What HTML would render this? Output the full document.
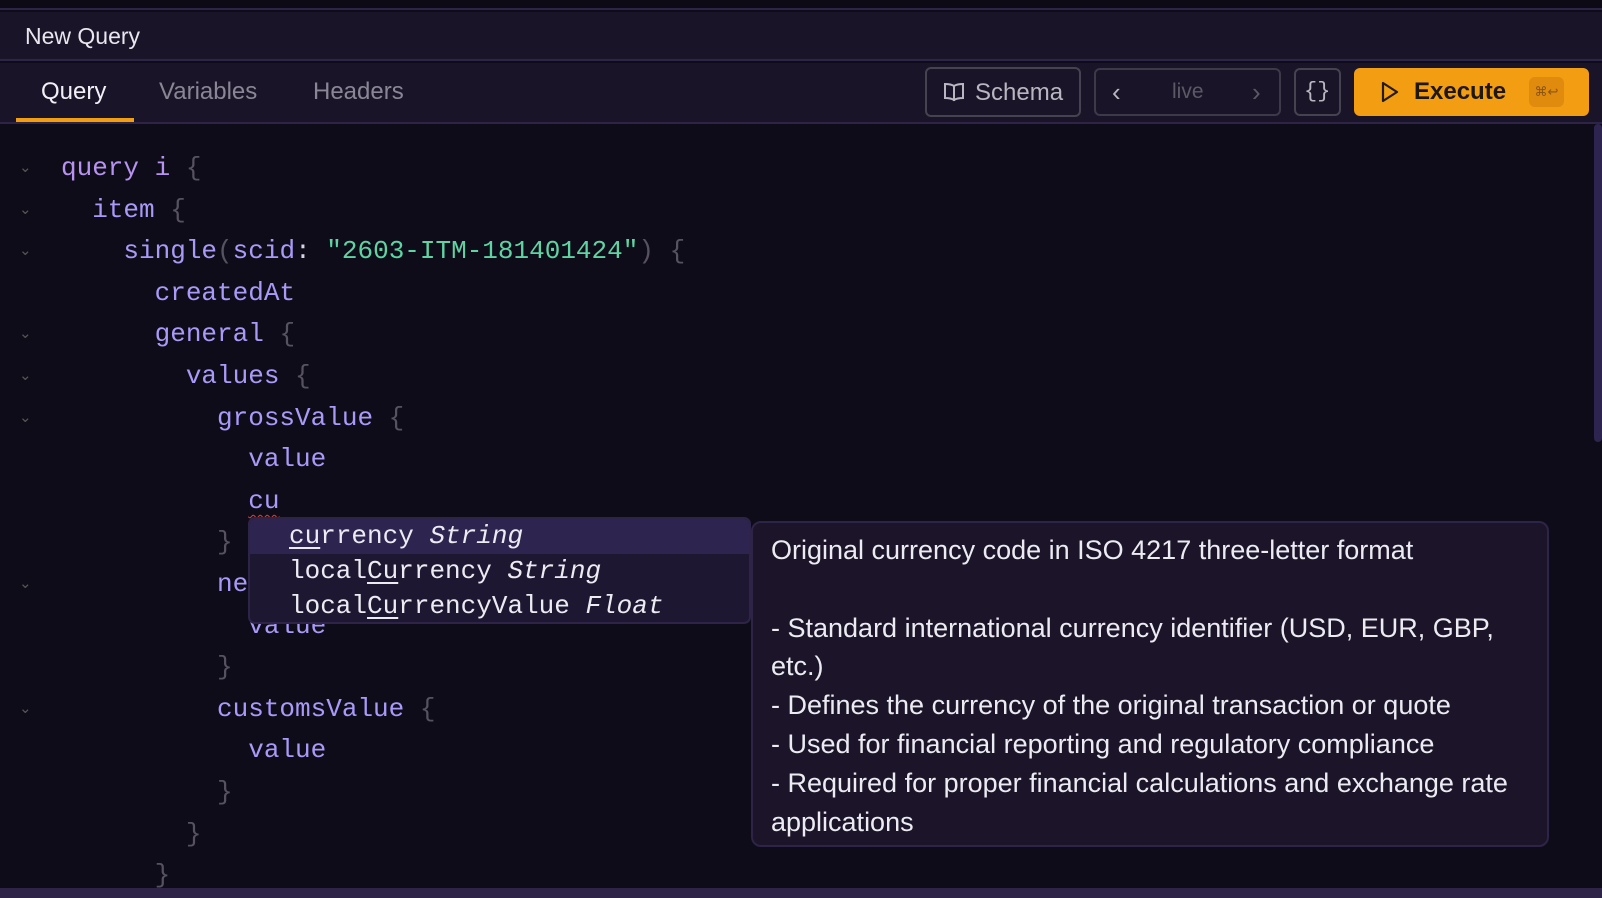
<!DOCTYPE html>
<html><head><meta charset="utf-8"><style>
*{margin:0;padding:0;box-sizing:border-box}
body{width:1602px;height:898px;background:#0f0c1a;position:relative;overflow:hidden;font-family:"Liberation Sans",sans-serif}
.top{position:absolute;left:0;top:0;width:1602px;height:10px;background:#0d0a16;border-bottom:2px solid #2e2448}
.hdr{position:absolute;left:0;top:12px;width:1602px;height:49px;background:#1a1428;border-bottom:2px solid #2e2448;color:#e8e6ee;font-size:23px;padding-left:25px;line-height:48px}
.tabs{position:absolute;left:0;top:63px;width:1602px;height:61px;background:#1a1428;border-bottom:2px solid #2e2448}
.tab{position:absolute;top:15px;font-size:24px;color:#8a8696}
.ul{position:absolute;left:16px;top:55px;width:118px;height:4px;background:#f29d12}
.btn{position:absolute;border:2px solid #46424f;border-radius:6px;color:#b8b6c0;font-size:24px}
.code{position:absolute;left:61px;top:148px;font-family:"Liberation Mono",monospace;font-size:26px;line-height:41.6px;color:#a99af8}
.code div{height:41.6px;white-space:pre}
.b{color:#56525f}.s{color:#5fd3a2}.w{color:#d8d4e4}.k{color:#b892f0}
.chev{position:absolute;left:19px;font-size:15px;color:#555;font-family:"DejaVu Sans",sans-serif}
.ac{position:absolute;left:248px;top:517px;width:503px;height:107px;background:#1d1731;border:2px solid #2e2448;border-radius:7px;font-family:"Liberation Mono",monospace;font-size:26px;color:#ecebf2;overflow:hidden}
.ac div{height:35px;line-height:35px;padding-left:39px;white-space:pre}
.ac .sel{background:#2e2450}
.ac u{text-decoration-thickness:2px;text-underline-offset:4px}
.tip{position:absolute;left:751px;top:521px;width:798px;height:326px;background:#1c1529;border:2px solid #2e2448;border-radius:10px;color:#ecebf2;font-size:27px;line-height:38.8px;padding:8px 18px}
.sb{position:absolute;left:1594px;top:124px;width:8px;height:318px;background:#2e2450;border-radius:4px}
.bot{position:absolute;left:0;top:888px;width:1602px;height:10px;background:#2d2448}
</style></head><body>
<div class="top"></div>
<div class="hdr">New Query</div>
<div class="tabs">
<div class="tab" style="left:41px;color:#f2f0f6">Query</div>
<div class="tab" style="left:159px">Variables</div>
<div class="tab" style="left:313px">Headers</div>
<div class="ul"></div>
</div>
<div class="btn" style="left:925px;top:67px;width:156px;height:50px">
<svg style="position:absolute;left:16px;top:13px" width="22" height="20" viewBox="0 0 22 20" fill="none" stroke="#b8b6c0" stroke-width="2"><path d="M11 4C8 2 5 2 2 2v14c3 0 6 0 9 2c3-2 6-2 9-2V2c-3 0-6 0-9 2zM11 4v15"/></svg>
<span style="position:absolute;left:48px;top:10px">Schema</span></div>
<div class="btn" style="left:1094px;top:68px;width:187px;height:48px;border-color:#3d3948">
<span style="position:absolute;left:16px;top:7px;font-size:26px">‹</span>
<span style="position:absolute;left:76px;top:10px;font-size:21px;color:#5c5866">live</span>
<span style="position:absolute;left:156px;top:7px;font-size:26px;color:#5c5866">›</span></div>
<div class="btn" style="left:1294px;top:68px;width:47px;height:48px"><span style="position:absolute;left:8px;top:9px;font-size:22px;font-family:'Liberation Mono',monospace">{}</span></div>
<div style="position:absolute;left:1354px;top:68px;width:235px;height:48px;background:#f29d12;border-radius:6px">
<svg style="position:absolute;left:26px;top:13px" width="20" height="22" viewBox="0 0 20 22" fill="none" stroke="#231a10" stroke-width="2.2" stroke-linejoin="round"><path d="M3 2L17 11L3 20Z"/></svg>
<span style="position:absolute;left:60px;top:10px;font-size:24px;font-weight:bold;color:#1e1710">Execute</span>
<div style="position:absolute;left:175px;top:9px;width:35px;height:30px;background:#e08a0e;border-radius:6px;color:#8a5510;font-size:13px;text-align:center;line-height:30px">⌘↩</div></div>

<div class="chev" style="top:158px">⌄</div><div class="chev" style="top:200px">⌄</div><div class="chev" style="top:241px">⌄</div><div class="chev" style="top:324px">⌄</div><div class="chev" style="top:366px">⌄</div><div class="chev" style="top:408px">⌄</div><div class="chev" style="top:574px">⌄</div><div class="chev" style="top:699px">⌄</div>

<div class="code"><div><span class="k">query i</span> <span class="b">{</span></div><div>  item <span class="b">{</span></div><div>    single<span class="b">(</span>scid<span class="w">:</span> <span class="s">"2603-ITM-181401424"</span><span class="b">)</span> <span class="b">{</span></div><div>      createdAt</div><div>      general <span class="b">{</span></div><div>        values <span class="b">{</span></div><div>          grossValue <span class="b">{</span></div><div>            value</div><div>            <span style="text-decoration:underline wavy #e0403a;text-underline-offset:6px;text-decoration-thickness:1px">cu</span></div><div>          <span class="b">}</span></div><div>          ne</div><div>            value</div><div>          <span class="b">}</span></div><div>          customsValue <span class="b">{</span></div><div>            value</div><div>          <span class="b">}</span></div><div>        <span class="b">}</span></div><div>      <span class="b">}</span></div></div>

<div class="ac"><div class="sel"><u>cu</u>rrency <i>String</i></div><div>local<u>Cu</u>rrency <i>String</i></div><div>local<u>Cu</u>rrencyValue <i>Float</i></div></div>
<div class="tip">Original currency code in ISO 4217 three-letter format<br><br>- Standard international currency identifier (USD, EUR, GBP, etc.)<br>- Defines the currency of the original transaction or quote<br>- Used for financial reporting and regulatory compliance<br>- Required for proper financial calculations and exchange rate applications</div>
<div class="sb"></div>
<div class="bot"></div>
</body></html>
